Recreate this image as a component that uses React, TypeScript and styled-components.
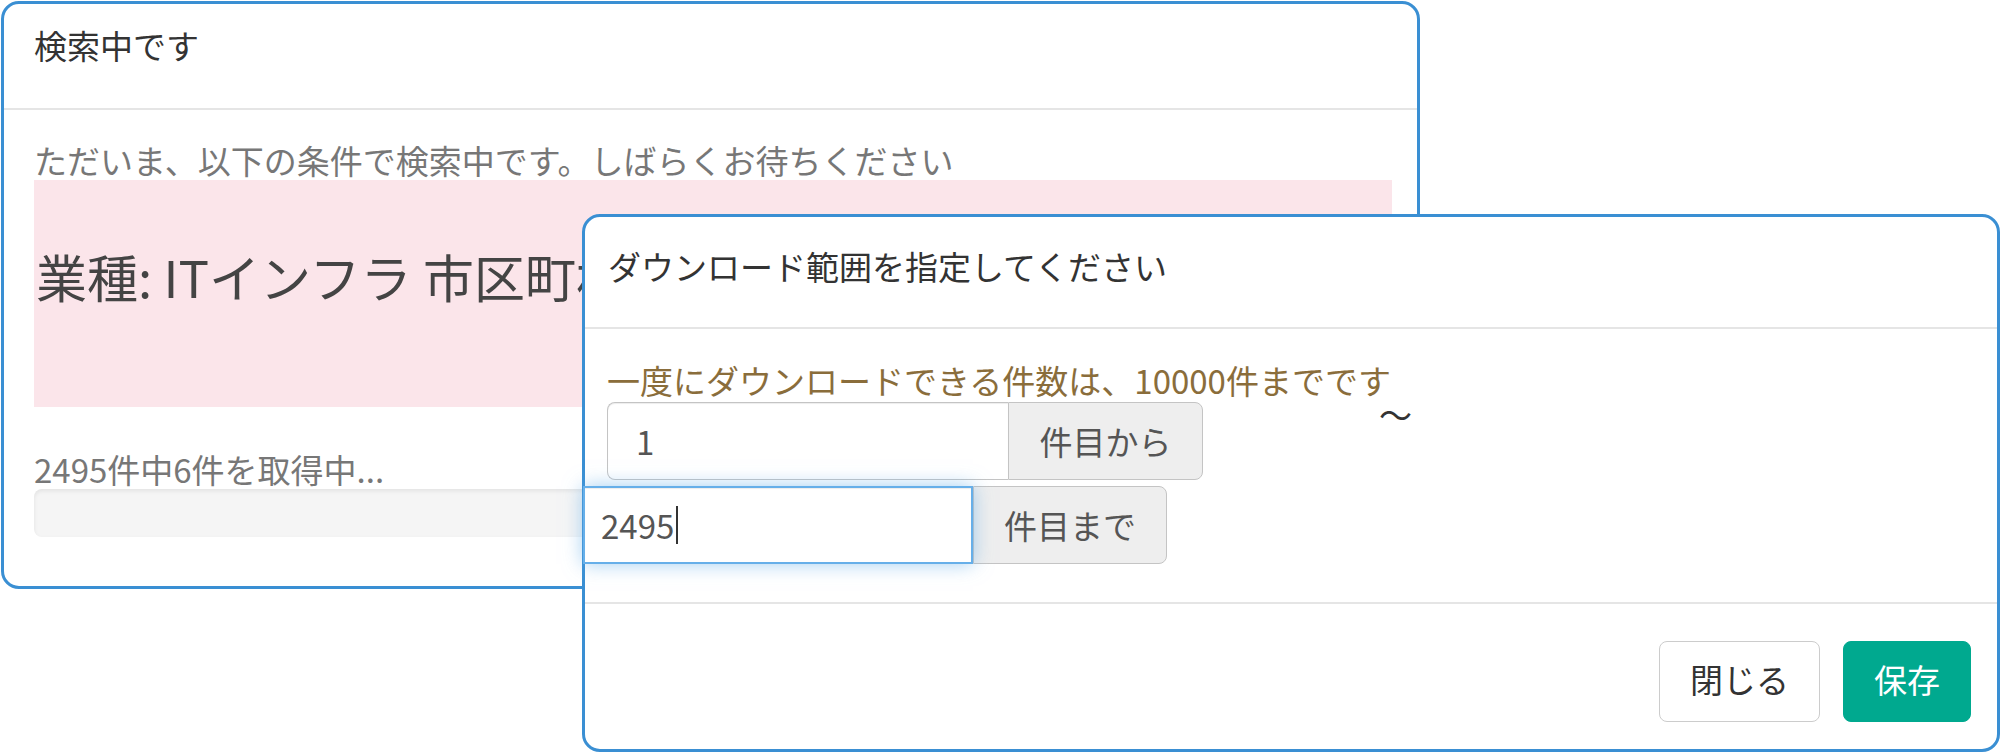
import React from "react";
import styled, { createGlobalStyle } from "styled-components";

const GlobalStyle = createGlobalStyle`
  html, body {
    margin: 0;
    padding: 0;
    background: #fff;
  }
  body {
    font-family: "Noto Sans CJK JP", "Noto Sans", sans-serif;
    font-size: 33px;
    color: #333;
  }
  * {
    box-sizing: border-box;
  }
`;

const Desktop = styled.div`
  position: relative;
  width: 2002px;
  height: 753px;
  overflow: hidden;
  background: #fff;
`;

// the two dialogs sit over each other like windows, so they get coordinates
const Modal = styled.div<{ $left: number; $top: number; $width: number; $z: number }>`
  position: absolute;
  left: ${(p) => p.$left}px;
  top: ${(p) => p.$top}px;
  width: ${(p) => p.$width}px;
  z-index: ${(p) => p.$z};
  background: #fff;
  border: 3px solid #3a8fd3;
  border-radius: 18px;
`;

const ModalHeader = styled.div<{ $pad: string }>`
  padding: ${(p) => p.$pad};
  border-bottom: 2px solid #e5e5e5;
`;

const ModalTitle = styled.h4`
  margin: 0;
  font-size: 33px;
  line-height: 47px;
  font-weight: 400;
  color: #333;
`;

const ModalBody = styled.div<{ $pad: string }>`
  padding: ${(p) => p.$pad};
`;

const ModalFooter = styled.div`
  display: flex;
  justify-content: flex-end;
  gap: 23px;
  padding: 37px 26px 27px;
  border-top: 2px solid #e5e5e5;
`;

const Lead = styled.p`
  margin: 0;
  line-height: 40px;
  color: #777;
`;

const Criteria = styled.div`
  background: #fbe5ea;
  padding: 66px 20px 101px 2px;
  font-size: 51px;
  line-height: 60px;
  color: #444;
  white-space: nowrap;
  overflow: hidden;
`;

const Status = styled.p`
  margin: 42px 0 0;
  line-height: 40px;
  color: #777;
`;

const Progress = styled.div`
  height: 48px;
  background: #f5f5f5;
  border-radius: 8px;
  box-shadow: inset 0 2px 4px rgba(0, 0, 0, 0.08);
`;

const Notice = styled.p`
  margin: 0;
  line-height: 40px;
  color: #8a6d3b;
`;

const Row = styled.div<{ $gap: number }>`
  display: flex;
  align-items: flex-start;
  margin-top: ${(p) => p.$gap}px;
`;

const InputGroup = styled.div<{ $shift: number }>`
  display: flex;
  height: 78px;
  margin-left: ${(p) => p.$shift}px;
`;

const Field = styled.div<{ $width: number; $padLeft: number; $focused?: boolean }>`
  position: relative;
  z-index: ${(p) => (p.$focused ? 2 : 1)};
  display: flex;
  align-items: center;
  width: ${(p) => p.$width}px;
  padding-left: ${(p) => p.$padLeft}px;
  background: #fff;
  color: #555;
  font-size: 33px;
  line-height: 1;
  border: ${(p) => (p.$focused ? "2px solid #66afe9" : "1px solid #c4c4c4")};
  border-right: ${(p) => (p.$focused ? "2px solid #66afe9" : "0")};
  border-radius: ${(p) => (p.$focused ? "0" : "8px 0 0 8px")};
  box-shadow: ${(p) =>
    p.$focused
      ? "inset 0 1px 1px rgba(0,0,0,.075), 0 0 18px rgba(102,175,233,.6)"
      : "inset 0 1px 1px rgba(0,0,0,.075)"};
`;

const Caret = styled.span`
  display: inline-block;
  width: 2px;
  height: 38px;
  margin-left: 2px;
  background: #333;
`;

const Addon = styled.div<{ $width: number }>`
  display: flex;
  align-items: center;
  justify-content: center;
  width: ${(p) => p.$width}px;
  background: #eee;
  color: #555;
  border: 1px solid #c4c4c4;
  border-radius: 0 8px 8px 0;
`;

const Tilde = styled.span`
  margin-left: 176px;
  margin-top: 2px;
  line-height: 20px;
  color: #333;
`;

const Button = styled.button<{ $primary?: boolean }>`
  font-family: "Noto Sans CJK JP", "Noto Sans", sans-serif;
  font-size: 33px;
  line-height: 47px;
  padding: 14px 30px 18px;
  border-radius: 8px;
  border: 1px solid ${(p) => (p.$primary ? "#00a98f" : "#cccccc")};
  background: ${(p) => (p.$primary ? "#00a98f" : "#fff")};
  color: ${(p) => (p.$primary ? "#fff" : "#333")};
  cursor: pointer;
`;

export default function App() {
  return (
    <>
      <GlobalStyle />
      <Desktop>
        <Modal $left={1} $top={1} $width={1419} $z={1}>
          <ModalHeader $pad="18px 30px 39px">
            <ModalTitle>検索中です</ModalTitle>
          </ModalHeader>
          <ModalBody $pad="30px 25px 49px 30px">
            <Lead>ただいま、以下の条件で検索中です。しばらくお待ちください</Lead>
            <Criteria>業種: ITインフラ 市区町村</Criteria>
            <Status>2495件中6件を取得中...</Status>
            <Progress />
          </ModalBody>
        </Modal>

        <Modal $left={582} $top={214} $width={1418} $z={2}>
          <ModalHeader $pad="26px 24px 37px 23px">
            <ModalTitle>ダウンロード範囲を指定してください</ModalTitle>
          </ModalHeader>
          <ModalBody $pad="31px 26px 38px 22px">
            <Notice>一度にダウンロードできる件数は、10000件までです</Notice>
            <Row $gap={2}>
              <InputGroup $shift={0}>
                <Field $width={401} $padLeft={28}>1</Field>
                <Addon $width={195}>件目から</Addon>
              </InputGroup>
              <Tilde>〜</Tilde>
            </Row>
            <Row $gap={6}>
              <InputGroup $shift={-24}>
                <Field $width={390} $padLeft={16} $focused>
                  2495
                  <Caret />
                </Field>
                <Addon $width={194}>件目まで</Addon>
              </InputGroup>
            </Row>
          </ModalBody>
          <ModalFooter>
            <Button>閉じる</Button>
            <Button $primary>保存</Button>
          </ModalFooter>
        </Modal>
      </Desktop>
    </>
  );
}
